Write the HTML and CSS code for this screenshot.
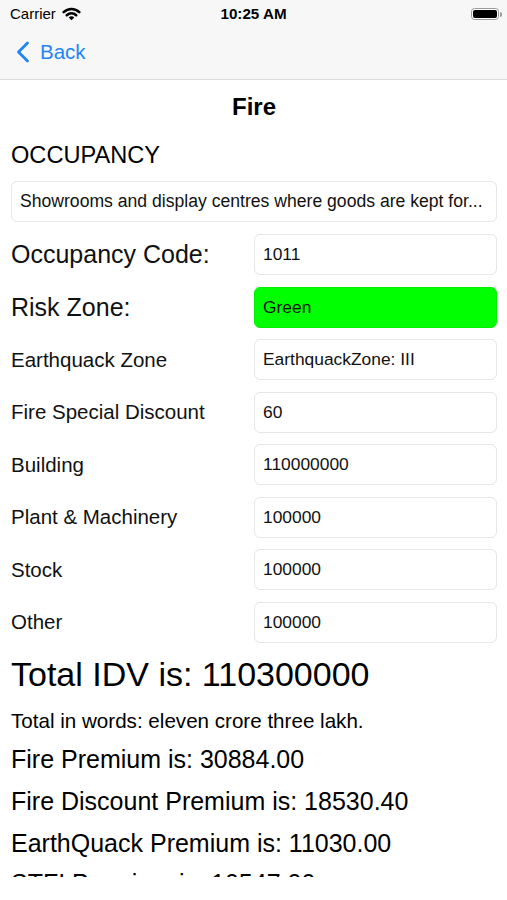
FILE: index.html
```html
<!DOCTYPE html>
<html>
<head>
<meta charset="utf-8">
<link rel="stylesheet" href="styles.css">
</head>
<body>
<header class="topbar">
  <div class="status">
    <div class="status-left">
      <span class="carrier">Carrier</span>
      <svg class="wifi" width="19" height="14" viewBox="0 0 18 13">
        <path d="M1.6 4.8 A10.5 10.5 0 0 1 16.4 4.8" fill="none" stroke="#000" stroke-width="2.4" stroke-linecap="round"/>
        <path d="M4.5 7.7 A6.5 6.5 0 0 1 13.5 7.7" fill="none" stroke="#000" stroke-width="2.4" stroke-linecap="round"/>
        <path d="M9 12.4 L6.4 9.8 A3.6 3.6 0 0 1 11.6 9.8 Z" fill="#000"/>
      </svg>
    </div>
    <span class="time">10:25 AM</span>
    <div class="battery"><div class="battery-body"><div class="battery-fill"></div></div><div class="battery-nub"></div></div>
  </div>
  <nav class="navbar">
    <a class="back">
      <svg class="chevron" width="14" height="22" viewBox="0 0 14 22">
        <path d="M11.5 2 L2.5 11 L11.5 20" fill="none" stroke="#1f84f5" stroke-width="2.8" stroke-linecap="round" stroke-linejoin="round"/>
      </svg>
      <span>Back</span>
    </a>
  </nav>
</header>
<main class="content">
  <h1 class="title">Fire</h1>
  <h2 class="section">OCCUPANCY</h2>
  <div class="field wide">Showrooms and display centres where goods are kept for...</div>
  <div class="form">
    <div class="label big">Occupancy Code:</div><div class="field">1011</div>
    <div class="label big">Risk Zone:</div><div class="field green">Green</div>
    <div class="label">Earthquack Zone</div><div class="field">EarthquackZone: III</div>
    <div class="label">Fire Special Discount</div><div class="field">60</div>
    <div class="label">Building</div><div class="field">110000000</div>
    <div class="label">Plant &amp; Machinery</div><div class="field">100000</div>
    <div class="label">Stock</div><div class="field">100000</div>
    <div class="label">Other</div><div class="field">100000</div>
  </div>
  <div class="total">Total IDV is: 110300000</div>
  <div class="words">Total in words: eleven crore three lakh.</div>
  <div class="premium">Fire Premium is: 30884.00</div>
  <div class="premium">Fire Discount Premium is: 18530.40</div>
  <div class="premium">EarthQuack Premium is: 11030.00</div>
  <div class="premium">STFI Premium is: 10547.00</div>
</main>
</body>
</html>
```
FILE: styles.css
```css
* { box-sizing: border-box; }
html, body { margin: 0; padding: 0; background: #fff; }
body {
  width: 507px;
  height: 900px;
  overflow: hidden;
  font-family: "Liberation Sans", Arial, sans-serif;
  color: #000;
}
.topbar {
  background: #f7f7f7;
  border-bottom: 1px solid #dcdcdc;
  height: 80px;
}
.status {
  height: 28px;
  display: flex;
  align-items: center;
  justify-content: space-between;
  padding: 0 5px 0 10px;
  position: relative;
}
.status-left { display: flex; align-items: center; gap: 6px; }
.carrier { font-size: 15px; line-height: 18px; }
.wifi { display: block; margin-top: -1px; }
.time {
  position: absolute;
  left: 0; right: 0;
  text-align: center;
  font-size: 15.2px;
  font-weight: bold;
  line-height: 18px;
}
.battery { display: flex; align-items: center; }
.battery-body {
  width: 28px; height: 12px;
  border: 1px solid #9a9a9a;
  border-radius: 3.5px;
  padding: 1px;
  background: #fff;
}
.battery-fill { width: 100%; height: 100%; background: #000; border-radius: 2px; }
.battery-nub { width: 2px; height: 5px; background: #9a9a9a; border-radius: 0 2px 2px 0; margin-left: 1px; }
.navbar {
  height: 51px;
  display: flex;
  align-items: center;
  padding-left: 16px;
  padding-bottom: 3px;
}
.back {
  display: flex;
  align-items: center;
  gap: 10px;
  color: #1f84f5;
  font-size: 20.5px;
}
.chevron { display: block; }
.content {
  height: 797px;
  overflow: hidden;
  padding: 12px 10px 0 11px;
}
.title {
  margin: 0;
  text-align: center;
  font-size: 24px;
  line-height: 30px;
  font-weight: bold;
}
.section {
  margin: 18px 0 0;
  font-size: 23.6px;
  line-height: 30px;
  font-weight: normal;
}
.field {
  height: 41px;
  border: 1px solid #e6e6e6;
  border-radius: 6px;
  background: #fff;
  padding: 0 8px;
  display: flex;
  align-items: center;
  font-size: 17.4px;
  white-space: nowrap;
  overflow: hidden;
  color: #111;
}
.field.wide { margin-top: 11px; font-size: 17.6px; }
.field.green { background: #00ff00; border-color: #00f000; }
.form {
  display: grid;
  grid-template-columns: 243px 243px;
  row-gap: 11.5px;
  margin-top: 12px;
}
.label {
  display: flex;
  align-items: center;
  font-size: 20.5px;
  color: #111;
  white-space: nowrap;
}
.label.big { font-size: 25px; }
.total {
  margin-top: 11px;
  font-size: 34px;
  line-height: 40px;
}
.words {
  margin-top: 14px;
  font-size: 20.6px;
  line-height: 26px;
}
.premium {
  font-size: 25px;
  line-height: 42px;
}
.words + .premium { margin-top: 4px; }
.premium:last-child { margin-top: -2px; }
```
